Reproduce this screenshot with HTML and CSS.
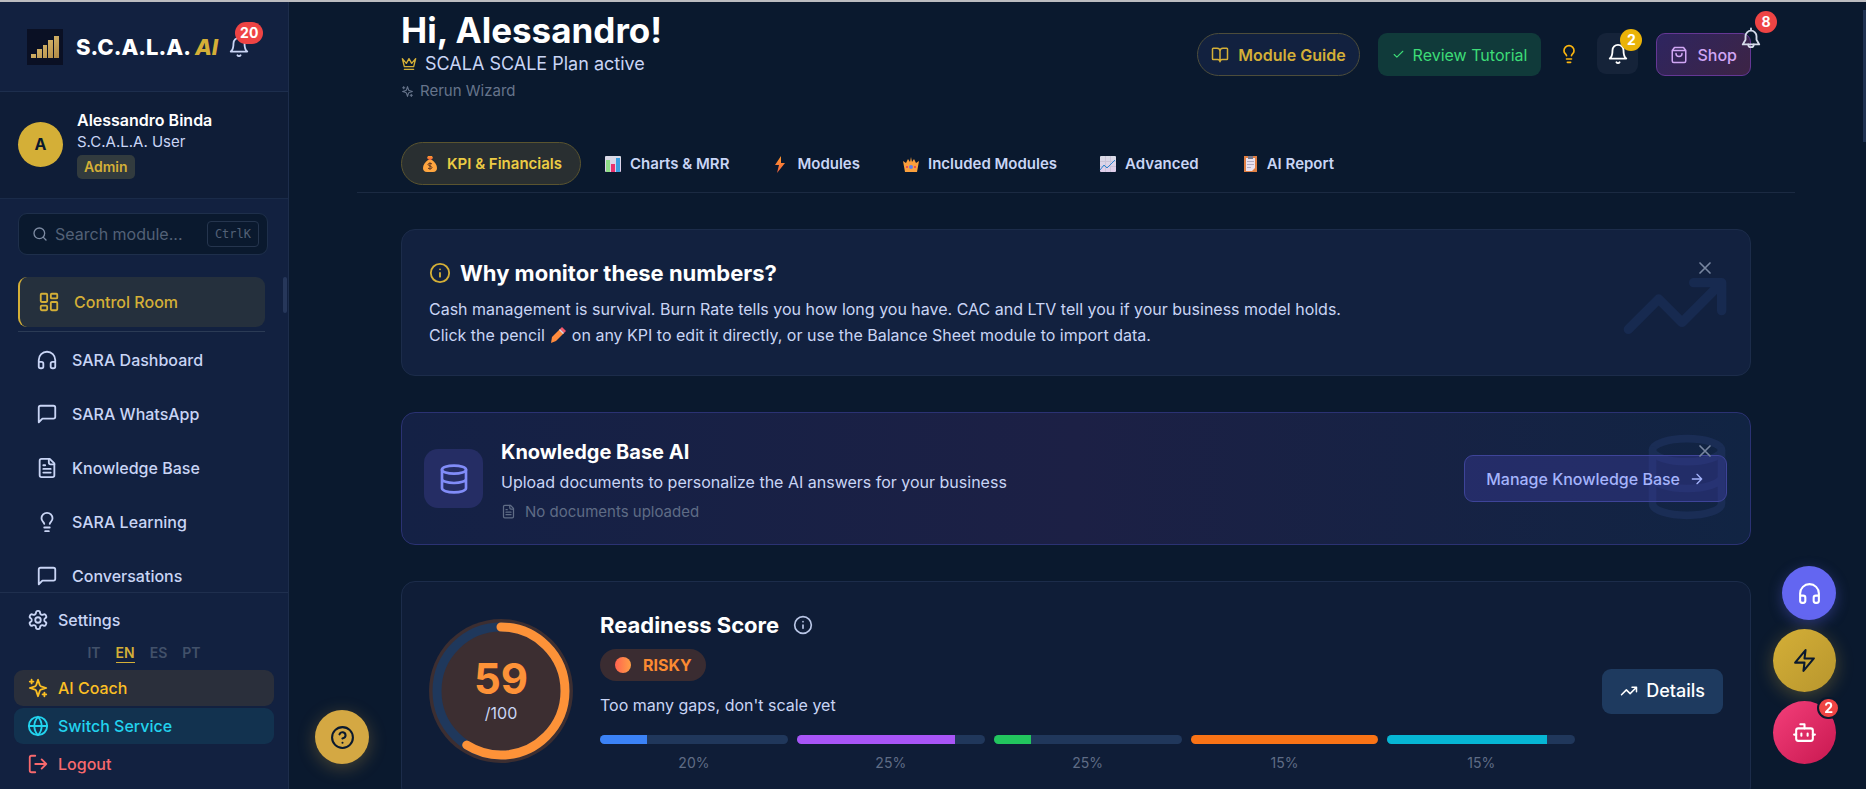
FILE: index.html
```html
<!DOCTYPE html>
<html lang="en">

	<head>
		<meta charset="UTF-8">
		<title>S.C.A.L.A. AI - Control Room</title>
		<link rel="stylesheet" href="styles.css">
	</head>

	<body>
		<svg class="sprite" aria-hidden="true">
			<defs>
				<linearGradient id="gold" x1="0" y1="0" x2="1" y2="1"><stop offset="0" stop-color="#e6c97c" /><stop offset="1" stop-color="#b08a45" /></linearGradient>
				<linearGradient id="fire" x1="0" y1="0" x2="0" y2="1"><stop offset="0" stop-color="#ff9a2e" /><stop offset="1" stop-color="#f4603e" /></linearGradient>
				<linearGradient id="ball" x1="0" y1="0" x2="1" y2="0"><stop offset="0" stop-color="#ff6350" /><stop offset="1" stop-color="#ff9f45" /></linearGradient>
				<linearGradient id="paper" x1="0" y1="0" x2="0" y2="1"><stop offset="0" stop-color="#d9dbe6" /><stop offset="1" stop-color="#e0cdea" /></linearGradient>
			</defs>
			<symbol id="i-bell" viewBox="0 0 24 24"><path d="M10.3 21a1.94 1.94 0 0 0 3.4 0" /><path d="M6 8a6 6 0 0 1 12 0c0 7 3 9 3 9H3s3-2 3-9" /></symbol>
			<symbol id="i-bell-round" viewBox="0 0 24 24"><path d="M12 3V1.500" /><path d="M6 10a6 6 0 0 1 12 0v4l3 5H3l3-5z" /><path d="M9 19a3 3 0 0 0 6 0" /></symbol>
			<symbol id="i-search" viewBox="0 0 24 24"><circle cx="11" cy="11" r="8" /><path d="m21 21-4.300-4.300" /></symbol>
			<symbol id="i-grid" viewBox="0 0 24 24"><rect width="7" height="9" x="3" y="3" rx="1" /><rect width="7" height="5" x="14" y="3" rx="1" /><rect width="7" height="9" x="14" y="12" rx="1" /><rect width="7" height="5" x="3" y="16" rx="1" /></symbol>
			<symbol id="i-headphones" viewBox="0 0 24 24"><path d="M3 14h3a2 2 0 0 1 2 2v3a2 2 0 0 1-2 2H5a2 2 0 0 1-2-2v-7a9 9 0 0 1 18 0v7a2 2 0 0 1-2 2h-1a2 2 0 0 1-2-2v-3a2 2 0 0 1 2-2h3" /></symbol>
			<symbol id="i-message" viewBox="0 0 24 24"><path d="M21 15a2 2 0 0 1-2 2H7l-4 4V5a2 2 0 0 1 2-2h14a2 2 0 0 1 2 2z" /></symbol>
			<symbol id="i-file" viewBox="0 0 24 24"><path d="M15 2H6a2 2 0 0 0-2 2v16a2 2 0 0 0 2 2h12a2 2 0 0 0 2-2V7Z" /><path d="M14 2v4a2 2 0 0 0 2 2h4M10 9H8M16 13H8M16 17H8" /></symbol>
			<symbol id="i-bulb" viewBox="0 0 24 24"><path d="M15 14c.2-1 .7-1.700 1.500-2.500 1-.9 1.500-2.200 1.500-3.500A6 6 0 0 0 6 8c0 1 .2 2.200 1.500 3.500.7.7 1.300 1.500 1.500 2.500M9 18h6M10 22h4" /></symbol>
			<symbol id="i-settings" viewBox="0 0 24 24"><path d="M12.220 2h-.44a2 2 0 0 0-2 2v.18a2 2 0 0 1-1 1.730l-.43.25a2 2 0 0 1-2 0l-.15-.08a2 2 0 0 0-2.730.73l-.22.38a2 2 0 0 0 .73 2.730l.15.1a2 2 0 0 1 1 1.720v.51a2 2 0 0 1-1 1.740l-.15.09a2 2 0 0 0-.73 2.730l.22.38a2 2 0 0 0 2.730.73l.15-.08a2 2 0 0 1 2 0l.43.25a2 2 0 0 1 1 1.730V20a2 2 0 0 0 2 2h.44a2 2 0 0 0 2-2v-.18a2 2 0 0 1 1-1.730l.43-.25a2 2 0 0 1 2 0l.15.08a2 2 0 0 0 2.730-.73l.22-.39a2 2 0 0 0-.73-2.730l-.15-.08a2 2 0 0 1-1-1.740v-.5a2 2 0 0 1 1-1.740l.15-.09a2 2 0 0 0 .73-2.730l-.22-.38a2 2 0 0 0-2.730-.73l-.15.08a2 2 0 0 1-2 0l-.43-.25a2 2 0 0 1-1-1.730V4a2 2 0 0 0-2-2z" /><circle cx="12" cy="12" r="3" /></symbol>
			<symbol id="i-sparkles" viewBox="0 0 24 24"><path d="m12 3-1.900 5.800a2 2 0 0 1-1.300 1.300L3 12l5.800 1.900a2 2 0 0 1 1.300 1.300L12 21l1.900-5.800a2 2 0 0 1 1.300-1.300L21 12l-5.800-1.900a2 2 0 0 1-1.300-1.300ZM5 3v4M19 17v4M3 5h4M17 19h4" /></symbol>
			<symbol id="i-globe" viewBox="0 0 24 24"><circle cx="12" cy="12" r="10" /><path d="M12 2a14.500 14.500 0 0 0 0 20 14.500 14.500 0 0 0 0-20M2 12h20" /></symbol>
			<symbol id="i-logout" viewBox="0 0 24 24"><path d="M9 21H5a2 2 0 0 1-2-2V5a2 2 0 0 1 2-2h4M16 17l5-5-5-5M21 12H9" /></symbol>
			<symbol id="i-crown" viewBox="0 0 24 24"><path d="m2 4 3 12h14l3-12-6 7-4-7-4 7-6-7zM5 20h14" /></symbol>
			<symbol id="i-book" viewBox="0 0 24 24"><path d="M12 7v14M3 18a1 1 0 0 1-1-1V4a1 1 0 0 1 1-1h5a4 4 0 0 1 4 4 4 4 0 0 1 4-4h5a1 1 0 0 1 1 1v13a1 1 0 0 1-1 1h-6a3 3 0 0 0-3 3 3 3 0 0 0-3-3z" /></symbol>
			<symbol id="i-check" viewBox="0 0 24 24"><path d="M20 6 9 17l-5-5" /></symbol>
			<symbol id="i-bag" viewBox="0 0 24 24"><path d="M6 2 3 6v14a2 2 0 0 0 2 2h14a2 2 0 0 0 2-2V6l-3-4ZM3 6h18M16 10a4 4 0 0 1-8 0" /></symbol>
			<symbol id="i-info" viewBox="0 0 24 24"><circle cx="12" cy="12" r="10" /><path d="M12 16v-4M12 8h.01" /></symbol>
			<symbol id="i-x" viewBox="0 0 24 24"><path d="M18 6 6 18M6 6l12 12" /></symbol>
			<symbol id="i-trend" viewBox="0 0 24 24"><path d="m22 7-8.500 8.500-5-5L2 17M16 7h6v6" /></symbol>
			<symbol id="i-database" viewBox="0 0 24 24"><ellipse cx="12" cy="5" rx="9" ry="3" /><path d="M3 5v14a9 3 0 0 0 18 0V5M3 12a9 3 0 0 0 18 0" /></symbol>
			<symbol id="i-arrow" viewBox="0 0 24 24"><path d="M5 12h14M12 5l7 7-7 7" /></symbol>
			<symbol id="i-zap" viewBox="0 0 24 24"><path d="M13 2 3 14h9l-1 8 10-12h-9l1-8z" /></symbol>
			<symbol id="i-bot" viewBox="0 0 24 24"><path d="M12 8V4H8" /><rect width="16" height="12" x="4" y="8" rx="2" /><path d="M2 14h2M20 14h2M15 13v2M9 13v2" /></symbol>
			<symbol id="i-help" viewBox="0 0 24 24"><circle cx="12" cy="12" r="10" /><path d="M9.090 9a3 3 0 0 1 5.830 1c0 2-3 3-3 3M12 17h.01" /></symbol>
		</svg>

		<aside class="sidebar">
			<div class="brand">
				<svg class="logo" viewBox="0 0 36 36" aria-hidden="true">
					<rect width="36" height="36" fill="#0a1024" />
					<path fill="url(#gold)" d="M4 25h5v4H4zM10 20h5v9h-5zM16 16h4v13h-4zM21 11h5v18h-5zM27 7h5v22h-5z" />
				</svg>
				<span class="brand-name">S.C.A.L.A. <em>AI</em></span>
				<button class="bell" aria-label="Notifications"><svg class="icon"><use href="#i-bell" /></svg><span class="badge badge-red">20</span></button>
			</div>
			<div class="user">
				<span class="avatar">A</span>
				<div class="user-text">
					<strong>Alessandro Binda</strong>
					<span>S.C.A.L.A. User</span>
					<span class="role">Admin</span>
				</div>
			</div>
			<div class="search">
				<svg class="icon"><use href="#i-search" /></svg>
				<input type="text" placeholder="Search module..." aria-label="Search module">
				<kbd>CtrlK</kbd>
			</div>
			<nav class="menu">
				<a class="active" href="#"><svg class="icon"><use href="#i-grid" /></svg>Control Room</a>
				<hr>
				<a href="#"><svg class="icon"><use href="#i-headphones" /></svg>SARA Dashboard</a>
				<a href="#"><svg class="icon"><use href="#i-message" /></svg>SARA WhatsApp</a>
				<a href="#"><svg class="icon"><use href="#i-file" /></svg>Knowledge Base</a>
				<a href="#"><svg class="icon"><use href="#i-bulb" /></svg>SARA Learning</a>
				<a href="#"><svg class="icon"><use href="#i-message" /></svg>Conversations</a>
				<span class="thumb"></span>
			</nav>
			<div class="side-footer">
				<a class="settings" href="#"><svg class="icon"><use href="#i-settings" /></svg>Settings</a>
				<div class="langs">
					<button>IT</button>
					<button class="on">EN</button>
					<button>ES</button>
					<button>PT</button>
				</div>
				<a class="coach" href="#"><svg class="icon"><use href="#i-sparkles" /></svg>AI Coach</a>
				<a class="switch" href="#"><svg class="icon"><use href="#i-globe" /></svg>Switch Service</a>
				<a class="logout" href="#"><svg class="icon"><use href="#i-logout" /></svg>Logout</a>
			</div>
		</aside>

		<main class="main">
			<header class="top">
				<div class="hello">
					<h1>Hi, Alessandro!</h1>
					<p class="plan"><svg class="icon"><use href="#i-crown" /></svg>SCALA SCALE Plan active</p>
					<button class="rerun"><svg class="icon"><use href="#i-sparkles" /></svg>Rerun Wizard</button>
				</div>
				<div class="actions">
					<button class="btn guide"><svg class="icon"><use href="#i-book" /></svg>Module Guide</button>
					<button class="btn review"><svg class="icon"><use href="#i-check" /></svg>Review Tutorial</button>
					<button class="tip" aria-label="Tips"><svg class="icon"><use href="#i-bulb" /></svg></button>
					<button class="alerts" aria-label="Alerts"><svg class="icon"><use href="#i-bell" /></svg><span class="badge badge-gold">2</span></button>
					<button class="btn shop"><svg class="icon"><use href="#i-bag" /></svg>Shop</button>
					<button class="float-bell" aria-label="Messages"><svg class="icon"><use href="#i-bell-round" /></svg><span class="badge badge-red">8</span></button>
				</div>
			</header>

			<div class="tabs">
				<button class="tab on">
					<svg class="emoji" viewBox="0 0 18 18"><path fill="url(#fire)" d="M7 1h4l1 2-2 2H8L6 3z" /><path fill="#ffa63f" d="M7 5h4c3 2 5 5 5 8 0 2-1 4-4 4H6c-3 0-4-2-4-4 0-3 2-6 5-8z" /><path fill="none" stroke="#5b3420" d="M11 9c-1-1-4-1-4 .5S11 11 11 12.500 8 14.500 7 13M9 7.500v7" /></svg>KPI &amp; Financials
				</button>
				<button class="tab">
					<svg class="emoji" viewBox="0 0 18 18"><rect x="1" y="1" width="16" height="16" rx="1" fill="url(#paper)" /><path fill="#8edc86" d="M2 5h4v12H2z" /><path fill="#e8336d" d="M7 9h4v8H7z" /><path fill="#3a9fe0" d="M12 3h4v14h-4z" /></svg>Charts &amp; MRR
				</button>
				<button class="tab">
					<svg class="emoji" viewBox="0 0 18 18"><path fill="url(#fire)" d="M10 1 4 10h4l-2 8 8-10h-4z" /></svg>Modules
				</button>
				<button class="tab">
					<svg class="emoji" viewBox="0 0 18 18"><path fill="#fba03c" d="m1 6 3 2 2-4 2 3 1-5 1 5 2-3 2 4 3-2-2 11H3z" /><circle cx="9" cy="12" r="2" fill="#5b7fe8" /><circle cx="5" cy="12" r="1" fill="#e5395b" /><circle cx="13" cy="12" r="1" fill="#e5395b" /></svg>Included Modules
				</button>
				<button class="tab">
					<svg class="emoji" viewBox="0 0 18 18"><rect x="1" y="1" width="16" height="16" rx="1" fill="url(#paper)" /><path fill="none" stroke="#cbc4d8" d="M1 6.500h16M1 11.500h16M6.500 1v16M11.500 1v16" /><path fill="none" stroke="#2e86d0" d="m1 15 4-5 3 3 8-8" /></svg>Advanced
				</button>
				<button class="tab">
					<svg class="emoji" viewBox="0 0 18 18"><rect x="3" y="1" width="13" height="16" fill="#e07f43" /><path fill="#e9e1f0" d="M5 3h9v10l-3 3H5z" /><path fill="#76788a" d="M7 1h5v3H7z" /><path stroke="#b3adc2" d="M6 6.500h7M6 9.500h7M6 12.500h4" /></svg>AI Report
				</button>
			</div>

			<section class="card why">
				<svg class="watermark icon"><use href="#i-trend" /></svg>
				<button class="close" aria-label="Close"><svg class="icon"><use href="#i-x" /></svg></button>
				<h2><svg class="icon"><use href="#i-info" /></svg>Why monitor these numbers?</h2>
				<p>Cash management is survival. Burn Rate tells you how long you have. CAC and LTV tell you if your business model holds.</p>
				<p>Click the pencil <svg class="emoji" viewBox="0 0 18 18"><path fill="#ff8b3d" d="m3 11 8-8 4 4-8 8-5 2z" /><path fill="#f4586b" d="m11 3 2-2 4 4-2 2z" /><path fill="#dcd5e6" d="m10 4 1-1 4 4-1 1z" /></svg> on any KPI to edit it directly, or use the Balance Sheet module to import data.</p>
			</section>

			<section class="card knowledge">
				<svg class="watermark icon"><use href="#i-database" /></svg>
				<span class="kb-icon"><svg class="icon"><use href="#i-database" /></svg></span>
				<div class="kb-text">
					<h3>Knowledge Base AI</h3>
					<p>Upload documents to personalize the AI answers for your business</p>
					<small><svg class="icon"><use href="#i-file" /></svg>No documents uploaded</small>
				</div>
				<button class="manage">Manage Knowledge Base<svg class="icon"><use href="#i-arrow" /></svg></button>
				<button class="close" aria-label="Close"><svg class="icon"><use href="#i-x" /></svg></button>
			</section>

			<section class="card readiness">
				<div class="ring">
					<svg viewBox="0 0 144 144" aria-hidden="true">
						<circle class="track" cx="72" cy="72" r="64" />
						<circle class="value" cx="72" cy="72" r="64" pathLength="100" stroke-dasharray="59 100" transform="rotate(-90 72 72)" />
					</svg>
					<strong>59</strong>
					<span>/100</span>
				</div>
				<div class="score">
					<h2>Readiness Score<svg class="icon"><use href="#i-info" /></svg></h2>
					<span class="risk"><svg class="emoji" viewBox="0 0 18 18"><circle cx="9" cy="9" r="8" fill="url(#ball)" /></svg>RISKY</span>
					<p>Too many gaps, don't scale yet</p>
					<div class="bars">
						<div class="bar"><div class="rail"><i class="blue" style="width: 25%"></i></div>20%</div>
						<div class="bar"><div class="rail"><i class="purple" style="width: 84%"></i></div>25%</div>
						<div class="bar"><div class="rail"><i class="green" style="width: 20%"></i></div>25%</div>
						<div class="bar"><div class="rail"><i class="orange" style="width: 100%"></i></div>15%</div>
						<div class="bar"><div class="rail"><i class="cyan" style="width: 85%"></i></div>15%</div>
					</div>
				</div>
				<button class="details"><svg class="icon"><use href="#i-trend" /></svg>Details</button>
			</section>
			<span class="thumb"></span>
		</main>

		<button class="fab help" aria-label="Help"><svg class="icon"><use href="#i-help" /></svg></button>
		<div class="fabs">
			<button class="fab voice" aria-label="Voice assistant"><svg class="icon"><use href="#i-headphones" /></svg></button>
			<button class="fab big quick" aria-label="Quick actions"><svg class="icon"><use href="#i-zap" /></svg></button>
			<button class="fab big bot" aria-label="Chat bot"><svg class="icon"><use href="#i-bot" /></svg><span class="badge badge-red">2</span></button>
		</div>
	</body>

</html>
```
FILE: styles.css
```css
* {
	margin: 0;
	padding: 0;
	box-sizing: border-box;
}

body {
	display: flex;
	height: 100vh;
	overflow: hidden;
	border-top: 2px solid #bcbcc0;
	background: #0a192e;
	color: #c9d5f5;
	font: 16px/24px Inter, "Liberation Sans", sans-serif;
}

a {
	color: inherit;
	text-decoration: none;
}

button {
	border: 0;
	background: none;
	color: inherit;
	font: inherit;
	cursor: pointer;
}

.sprite {
	position: absolute;
	width: 0;
	height: 0;
}

.icon {
	flex: none;
	width: 22px;
	height: 22px;
	fill: none;
	stroke: currentColor;
	stroke-width: 2;
	stroke-linecap: round;
	stroke-linejoin: round;
}

.emoji {
	flex: none;
	width: 18px;
	height: 18px;
}

.badge {
	position: absolute;
	min-width: 22px;
	height: 22px;
	padding: 0 5px;
	border-radius: 11px;
	color: #fff;
	font-size: 14px;
	font-weight: 700;
	line-height: 22px;
	text-align: center;
}

.badge-red {
	background: #ef4444;
}

.badge-gold {
	background: #eab308;
}

/* sidebar */

.sidebar {
	display: flex;
	flex-direction: column;
	flex: none;
	width: 289px;
	background: #122140;
	border-right: 1px solid #1d2d4b;
}

.brand {
	display: flex;
	align-items: center;
	height: 90px;
	padding: 0 27px;
	border-bottom: 1px solid #1d2e4d;
}

.logo {
	width: 36px;
	height: 36px;
	margin-right: 13px;
}

.brand-name {
	color: #fff;
	font-size: 22px;
	font-weight: 800;
	white-space: nowrap;
}

.brand-name em {
	color: #d4af37;
}

.bell {
	position: relative;
	height: 22px;
	margin-left: 10px;
}

.bell .badge {
	top: -14px;
	left: 7px;
}

.user {
	display: flex;
	align-items: center;
	gap: 14px;
	height: 107px;
	padding: 0 18px 2px;
	background: #0f1d37;
	border-bottom: 1px solid #1a2b49;
}

.avatar {
	width: 45px;
	height: 45px;
	border-radius: 50%;
	background: #d4af37;
	color: #0a192e;
	font-weight: 700;
	line-height: 45px;
	text-align: center;
}

.user-text {
	display: flex;
	flex-direction: column;
	align-items: flex-start;
	font-size: 15px;
	line-height: 22px;
}

.user-text strong {
	color: #fff;
	font-weight: 600;
	font-size: 16px;
}

.role {
	margin-top: 2px;
	padding: 1px 7px;
	border-radius: 5px;
	background: #323b3e;
	color: #d4af37;
	font-size: 14px;
	font-weight: 600;
}

.search {
	display: flex;
	align-items: center;
	height: 42px;
	margin: 14px 20px 22px 18px;
	padding: 0 8px 0 13px;
	border: 1px solid #1e2f4b;
	border-radius: 9px;
	background: #0a192e;
	color: #7e8ca3;
}

.search .icon {
	width: 16px;
	height: 16px;
	margin-right: 7px;
}

.search input {
	flex: 1;
	min-width: 0;
	border: 0;
	background: none;
	color: #c9d5f5;
	font: inherit;
	outline: none;
}

.search input::placeholder {
	color: #536177;
}

.search kbd {
	padding: 0 7px;
	border: 1px solid #25354e;
	border-radius: 4px;
	color: #536177;
	font: 12px/24px "DejaVu Sans Mono", monospace;
}

.menu {
	position: relative;
	flex: 1;
	min-height: 0;
	overflow: hidden;
	padding: 0 23px 0 18px;
}

.menu a {
	display: flex;
	align-items: center;
	gap: 14px;
	height: 50px;
	margin-bottom: 4px;
	padding-left: 18px;
	border-radius: 9px;
	font-weight: 500;
}

.menu a.active {
	border-left: 2px solid #d4af37;
	background: #25303d;
	color: #d4af37;
}

.menu hr {
	margin-bottom: 3px;
	border: 0;
	border-top: 1px solid #2b3b55;
}

.menu .thumb {
	position: absolute;
	top: 0;
	right: 1px;
	width: 4px;
	height: 36px;
	border-radius: 2px;
	background: #26375a;
}

.side-footer {
	padding: 9px 14px 7px;
	border-top: 1px solid #1f2f4e;
}

.side-footer a {
	display: flex;
	align-items: center;
	gap: 9px;
	height: 36px;
	margin-bottom: 2px;
	padding-left: 13px;
	border-radius: 9px;
	font-weight: 500;
}

.langs {
	display: flex;
	justify-content: center;
	gap: 15px;
	height: 30px;
	padding-top: 3px;
	color: #42516a;
	font-size: 14px;
	font-weight: 600;
}

.langs button {
	height: 20px;
	line-height: 20px;
}

.langs .on {
	border-bottom: 1px solid #d4af37;
	color: #d4af37;
}

.side-footer .coach {
	background: #2a2f3b;
	color: #fbbf24;
}

.side-footer .switch {
	background: #12324f;
	color: #22d3ee;
}

.side-footer .logout {
	margin-bottom: 0;
	color: #f8696d;
}

/* main column */

.main {
	position: relative;
	flex: 1;
	min-width: 0;
	overflow: hidden;
	padding: 0 71px 0 68px;
}

.main > .thumb {
	position: absolute;
	top: 8px;
	right: 0;
	width: 3px;
	height: 132px;
	background: #1f3151;
}

.top {
	display: flex;
	justify-content: space-between;
	margin: 0 44px;
	padding-top: 8px;
}

h1 {
	color: #fff;
	font-size: 35px;
	font-weight: 700;
	line-height: 40px;
}

.plan {
	display: flex;
	align-items: center;
	gap: 8px;
	font-size: 18px;
	line-height: 28px;
}

.plan .icon {
	width: 16px;
	height: 16px;
	color: #d4af37;
}

.rerun {
	display: flex;
	align-items: center;
	gap: 6px;
	color: #66748b;
	font-size: 15px;
	line-height: 26px;
}

.rerun .icon {
	width: 13px;
	height: 13px;
}

.actions {
	position: relative;
	display: flex;
	align-items: flex-start;
	gap: 18px;
	padding-top: 23px;
}

.btn {
	display: flex;
	align-items: center;
	gap: 9px;
	height: 43px;
	padding: 0 13px;
	border: 1px solid transparent;
	border-radius: 9px;
	font-weight: 500;
}

.btn .icon {
	width: 18px;
	height: 18px;
}

.guide {
	border-color: #4d4d3b;
	border-radius: 22px;
	background: #12213f;
	color: #d4af37;
	font-weight: 600;
}

.review {
	gap: 8px;
	background: #103a3a;
	color: #3ddc77;
	font-weight: 400;
}

.review .icon {
	width: 13px;
	height: 13px;
}

.tip {
	display: flex;
	justify-content: center;
	width: 20px;
	padding-top: 11px;
	color: #fbb50f;
}

.tip .icon {
	width: 20px;
	height: 20px;
}

.alerts {
	position: relative;
	width: 41px;
	height: 41px;
	border-radius: 9px;
	background: #152339;
	color: #fff;
	line-height: 0;
}

.alerts .badge {
	top: -4px;
	right: -4px;
}

.shop {
	border-color: #653795;
	background: linear-gradient(135deg, #2e2560, #3d2445);
	color: #d1a6f5;
}

.float-bell {
	position: absolute;
	top: 17px;
	right: -11px;
	color: #d5dbea;
	line-height: 0;
}

.float-bell .badge {
	top: -16px;
	left: 15px;
}

.tabs {
	display: flex;
	gap: 3px;
	margin-top: 38px;
	padding: 0 44px 7px;
	border-bottom: 1px solid #1b2a42;
}

.tab {
	display: flex;
	align-items: center;
	gap: 8px;
	height: 43px;
	padding: 0 18px 0 19px;
	border: 1px solid transparent;
	border-radius: 22px;
	font-size: 15px;
	font-weight: 600;
	white-space: nowrap;
}

.tab.on {
	border-color: #5a542f;
	background: #292f31;
	color: #eccb44;
}

.card {
	position: relative;
	margin: 36px 44px 0;
	border: 1px solid #1c2c4a;
	border-radius: 14px;
	background: #12213f;
}

h2,
h3 {
	color: #fff;
	font-weight: 700;
}

h2 {
	display: flex;
	align-items: center;
	gap: 9px;
	font-size: 22px;
	line-height: 32px;
}

h3 {
	font-size: 20px;
	line-height: 28px;
}

.close {
	position: absolute;
	right: 35px;
	color: #7886a0;
	line-height: 0;
}

.close .icon {
	width: 20px;
	height: 20px;
}

.watermark {
	position: absolute;
	color: #172a50;
}

.why {
	padding: 27px 27px 26px;
}

.why h2 {
	margin-bottom: 7px;
}

.why h2 .icon {
	color: #d4af37;
}

.why p {
	line-height: 26px;
}

.why p:last-child {
	margin-bottom: 1px;
}

.why p .emoji {
	vertical-align: -3px;
}

.why .close {
	top: 28px;
}

.why .watermark {
	top: 20px;
	right: 19px;
	width: 112px;
	height: 112px;
}

.knowledge {
	display: flex;
	align-items: center;
	gap: 18px;
	height: 133px;
	padding: 0 23px 0 22px;
	border-color: #2b3273;
	background: linear-gradient(90deg, #142145, #1c2045 50%, #112443);
}

.kb-icon {
	display: flex;
	align-items: center;
	justify-content: center;
	width: 59px;
	height: 59px;
	border-radius: 14px;
	background: #252d64;
	color: #818cf8;
}

.kb-icon .icon {
	width: 32px;
	height: 32px;
}

.kb-text {
	flex: 1;
	padding-top: 6px;
}

.kb-text p {
	line-height: 32px;
}

.kb-text small {
	display: flex;
	align-items: center;
	gap: 9px;
	color: #5f6c85;
	font-size: 15px;
	line-height: 28px;
}

.kb-text small .icon {
	width: 15px;
	height: 15px;
}

.manage {
	position: relative;
	display: flex;
	align-items: center;
	gap: 9px;
	height: 47px;
	padding: 0 21px;
	border: 1px solid #3e4499;
	border-radius: 9px;
	background: rgba(60, 60, 160, 0.4);
	color: #a5b4fc;
	font-weight: 500;
}

.manage .icon {
	width: 16px;
	height: 16px;
}

.knowledge .close {
	top: 28px;
}

.knowledge .watermark {
	top: 18px;
	right: 17px;
	width: 92px;
	height: 92px;
	color: #1a2d55;
}

.readiness {
	display: flex;
	align-items: center;
	gap: 27px;
	padding: 27px;
	background: #0f1d37;
}

.ring {
	position: relative;
	display: flex;
	flex-direction: column;
	align-items: center;
	justify-content: center;
	width: 144px;
	height: 144px;
	border-radius: 50%;
	background: #3c2e31;
}

.ring svg {
	position: absolute;
	width: 144px;
	height: 144px;
	fill: none;
	stroke-width: 9;
}

.ring .track {
	stroke: #1f385c;
}

.ring .value {
	stroke: #fd9238;
	stroke-linecap: round;
}

.ring strong {
	color: #fd9238;
	font-size: 42px;
	line-height: 44px;
}

.score {
	flex: 1;
}

.score h2 {
	gap: 14px;
}

.score h2 .icon {
	width: 20px;
	height: 20px;
	color: #b9c6e6;
}

.risk {
	display: inline-flex;
	align-items: center;
	gap: 11px;
	height: 32px;
	margin: 8px 0 12px;
	padding: 0 14px;
	border-radius: 16px;
	background: #3a2c31;
	color: #fb8a32;
	font-weight: 700;
	vertical-align: top;
}

.bars {
	display: flex;
	gap: 9px;
	margin-top: 18px;
}

.bar {
	flex: 1;
	color: #5f6c85;
	font-size: 14px;
	line-height: 20px;
	text-align: center;
}

.rail {
	height: 9px;
	margin-bottom: 9px;
	overflow: hidden;
	border-radius: 5px;
	background: #20375b;
}

.rail i {
	display: block;
	height: 9px;
}

.blue {
	background: #3b82f6;
}

.purple {
	background: #a855f7;
}

.green {
	background: #22c55e;
}

.orange {
	background: #f97316;
}

.cyan {
	background: #06b6d4;
}

.details {
	display: flex;
	align-items: center;
	gap: 8px;
	height: 45px;
	padding: 0 18px;
	border-radius: 9px;
	background: #1e3a5f;
	color: #fff;
	font-size: 18px;
	font-weight: 500;
}

.details .icon {
	width: 18px;
	height: 18px;
}

/* floating buttons */

.fabs {
	position: fixed;
	right: 30px;
	bottom: 25px;
	display: flex;
	flex-direction: column;
	align-items: flex-end;
	gap: 9px;
}

.fab {
	position: relative;
	display: flex;
	align-items: center;
	justify-content: center;
	width: 54px;
	height: 54px;
	border-radius: 50%;
}

.fab.big {
	width: 63px;
	height: 63px;
}

.fab .icon {
	width: 25px;
	height: 25px;
}

.help {
	position: fixed;
	left: 315px;
	bottom: 25px;
	background: #d4a843;
	color: #0a192e;
	box-shadow: 0 4px 18px rgba(212, 168, 67, 0.3);
}

.voice {
	background: #6366f1;
	color: #fff;
	box-shadow: 0 4px 14px rgba(99, 102, 241, 0.35);
}

.quick {
	background: linear-gradient(135deg, #d4af37, #b8962e);
	color: #0a192e;
	box-shadow: 0 4px 18px rgba(212, 175, 55, 0.3);
}

.bot {
	background: linear-gradient(135deg, #f43f7a, #c81850);
	color: #fff;
}

.bot .badge {
	top: -4px;
	right: -4px;
	border: 2px solid #0a192e;
	line-height: 18px;
}
```
